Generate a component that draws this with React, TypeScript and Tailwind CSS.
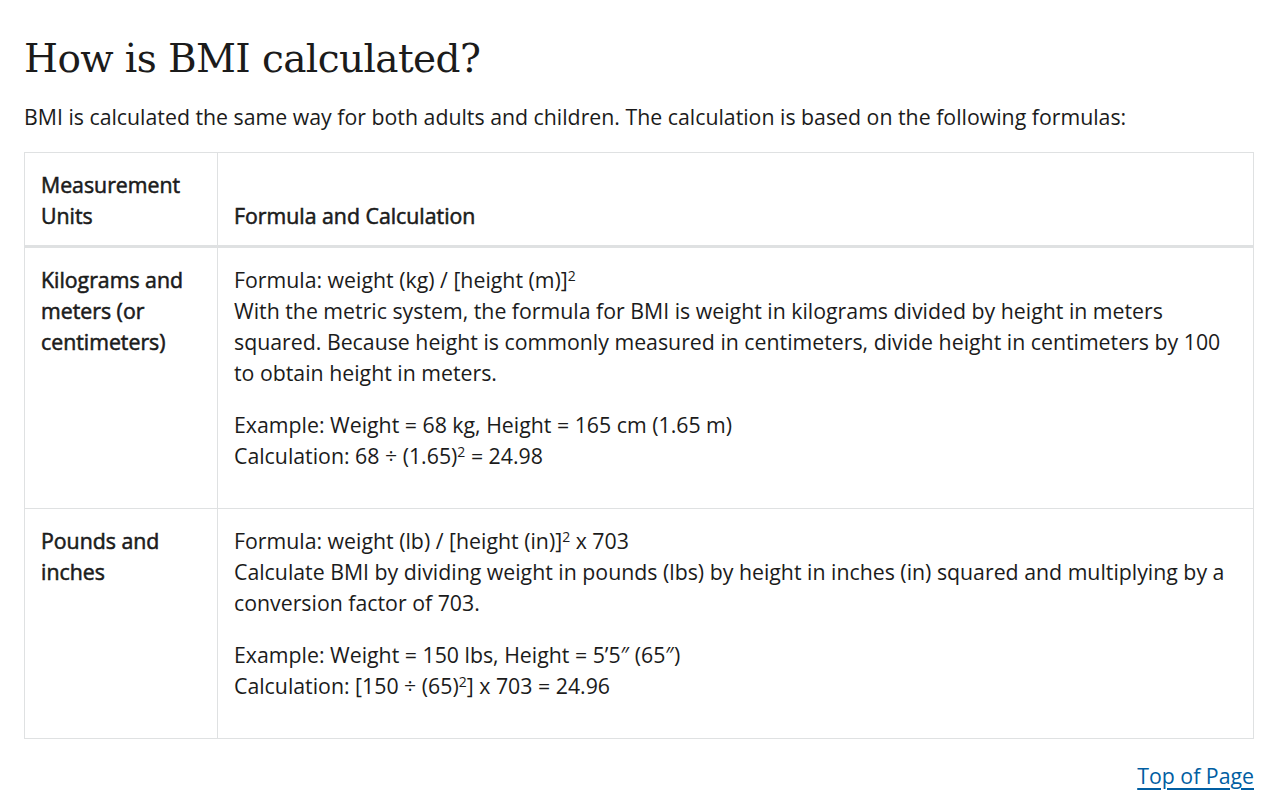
import React from "react";

const sup = (n: string) => <sup className="text-[14px]">{n}</sup>;

const rows = [
  {
    unit: "Kilograms and meters (or centimeters)",
    formula: <>Formula: weight (kg) / [height (m)]{sup("2")}</>,
    text: "With the metric system, the formula for BMI is weight in kilograms divided by height in meters squared. Because height is commonly measured in centimeters, divide height in centimeters by 100 to obtain height in meters.",
    example: "Example: Weight = 68 kg, Height = 165 cm (1.65 m)",
    calc: <>Calculation: 68 ÷ (1.65){sup("2")} = 24.98</>,
  },
  {
    unit: "Pounds and inches",
    formula: <>Formula: weight (lb) / [height (in)]{sup("2")} x 703</>,
    text: "Calculate BMI by dividing weight in pounds (lbs) by height in inches (in) squared and multiplying by a conversion factor of 703.",
    example: "Example: Weight = 150 lbs, Height = 5\u20195\u2033 (65\u2033)",
    calc: <>Calculation: [150 ÷ (65){sup("2")}] x 703 = 24.96</>,
  },
];

// medium-weight look: regular glyph widths with a thin stroke
const strong = "font-normal [-webkit-text-stroke:0.55px_currentColor]";

export default function App() {
  return (
    <div className="min-h-screen bg-white pl-6 pr-[13px] pt-[33px] text-[#1b1b1b] font-['Open_Sans',sans-serif]">
      <h1 className="font-['DejaVu_Serif',serif] text-[39px] leading-[52px] font-normal tracking-[-0.6px]">
        How is BMI calculated?
      </h1>
      <p className="mt-[16px] text-[21.3px] leading-[31px]">
        BMI is calculated the same way for both adults and children. The calculation is based on the following formulas:
      </p>

      <table className="mt-[20px] w-full border-collapse text-[21.3px] leading-[31px]">
        <thead>
          <tr className="border-b-[3px] border-[#dfe1e2]">
            <th className={`w-[193px] border border-[#dfe1e2] px-[16px] pt-[16px] pb-[14px] text-left align-bottom ${strong}`}>
              Measurement Units
            </th>
            <th className={`border border-[#dfe1e2] px-[16px] pt-[16px] pb-[14px] text-left align-bottom ${strong}`}>
              Formula and Calculation
            </th>
          </tr>
        </thead>
        <tbody>
          {rows.map((r, i) => (
            <tr key={i}>
              <td className={`border border-[#dfe1e2] px-[16px] pt-[16px] pb-[16px] align-top ${strong}`}>
                {r.unit}
              </td>
              <td className="border border-[#dfe1e2] px-[16px] pt-[16px] pb-[16px] align-top">
                <p className="mb-[21px]">
                  {r.formula}
                  <br />
                  {r.text}
                </p>
                <p className="mb-[21px]">
                  {r.example}
                  <br />
                  {r.calc}
                </p>
              </td>
            </tr>
          ))}
        </tbody>
      </table>

      <div className="mt-[21px] flex justify-end">
        <a href="#" className="text-[21.3px] leading-[31px] text-[#005ea2] underline underline-offset-[4px]">
          Top of Page
        </a>
      </div>
    </div>
  );
}
